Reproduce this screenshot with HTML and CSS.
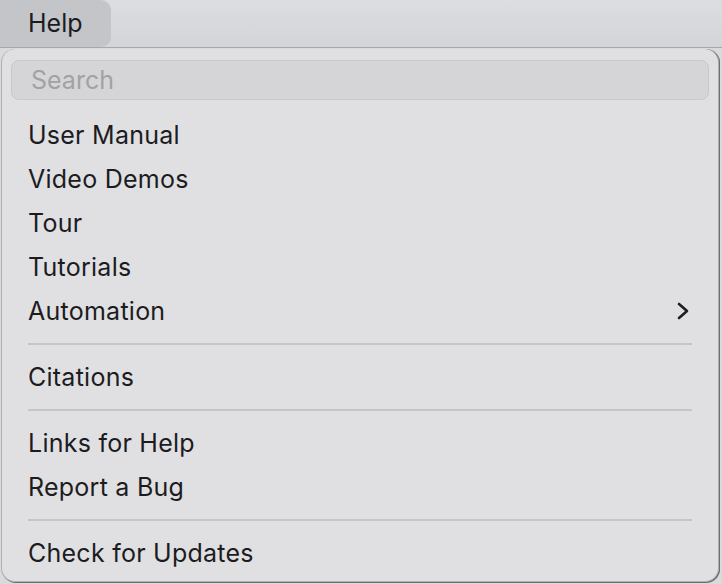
FILE: index.html
```html
<!DOCTYPE html>
<html>
<head>
<meta charset="utf-8">
<link rel="stylesheet" href="styles.css">
</head>
<body>
<div class="menubar">
  <div class="menubar-item active">Help</div>
</div>
<div class="menu">
  <div class="search"><span class="placeholder">Search</span></div>
  <div class="items">
    <div class="item">User Manual</div>
    <div class="item">Video Demos</div>
    <div class="item">Tour</div>
    <div class="item">Tutorials</div>
    <div class="item has-sub">Automation
      <svg class="chevron" width="14" height="18" viewBox="0 0 14 18"><path d="M3 2 L11 9 L3 16" fill="none" stroke="#1e1e20" stroke-width="2.6" stroke-linecap="round" stroke-linejoin="round"/></svg>
    </div>
    <div class="sep"></div>
    <div class="item">Citations</div>
    <div class="sep"></div>
    <div class="item">Links for Help</div>
    <div class="item">Report a Bug</div>
    <div class="sep"></div>
    <div class="item">Check for Updates</div>
  </div>
</div>
</body>
</html>
```
FILE: styles.css
```css
html, body {
  margin: 0;
  padding: 0;
}
body {
  width: 722px;
  height: 584px;
  overflow: hidden;
  background: #d9dadd;
  font-family: Inter, "Noto Sans", sans-serif;
  color: #1c1c1e;
}
.menubar {
  height: 48px;
  display: flex;
  background: linear-gradient(#dcdde0, #d4d5d9);
  border-bottom: 1px solid #a8a8ac;
  box-sizing: border-box;
}
.menubar-item {
  height: 47px;
  box-sizing: border-box;
  padding: 0 28px 0 28px;
  display: flex;
  align-items: center;
  font-size: 25px;
  padding-bottom: 2px;
}
.menubar-item.active {
  background: #c4c5c9;
  border-radius: 0 10px 10px 0;
  width: 111px;
}
.menu {
  margin-left: 1px;
  margin-top: 1px;
  width: 718px;
  height: 533px;
  box-sizing: border-box;
  background: #e0e0e3;
  border: 1px solid #b0b0b4;
  border-top: none;
  border-radius: 14px;
  box-shadow: 1px 1px 0 #6e6e72, 1px 0 0 #6e6e72;
  padding: 11px 9px 0 9px;
}
.search {
  height: 40px;
  box-sizing: border-box;
  background: #d5d5d8;
  border: 1px solid #c8c8cb;
  border-radius: 8px;
  display: flex;
  align-items: center;
  padding-left: 19px;
  font-size: 25px;
}
.placeholder {
  color: #a2a2a5;
}
.items {
  padding-top: 13px;
}
.item {
  height: 44px;
  display: flex;
  align-items: center;
  padding-left: 17px;
  font-size: 25px;
  letter-spacing: 0.25px;
  position: relative;
}
.has-sub .chevron {
  position: absolute;
  right: 19px;
  top: 13px;
}
.sep {
  height: 22px;
  display: flex;
  align-items: center;
  padding: 0 17px 0 17px;
}
.sep::before {
  content: "";
  flex: 1;
  height: 2px;
  background: #c5c5c8;
}
```
